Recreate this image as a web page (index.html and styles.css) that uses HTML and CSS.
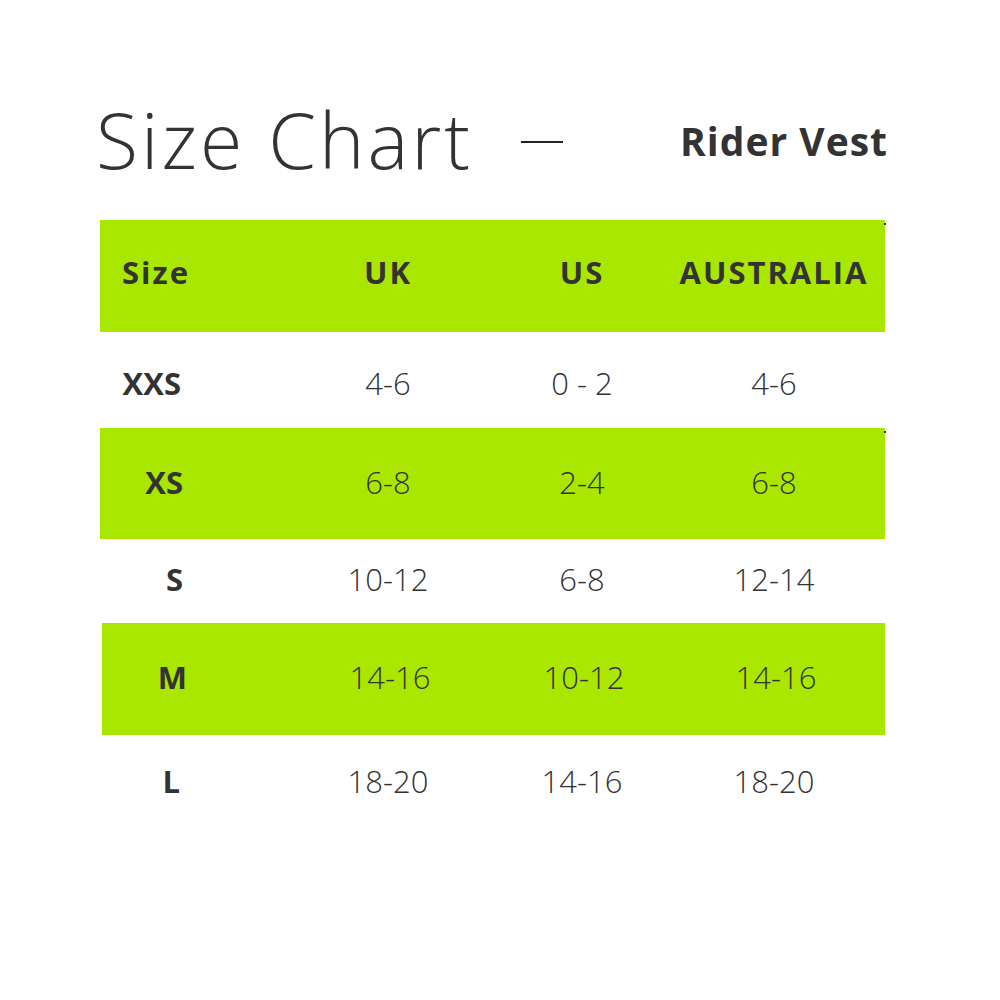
FILE: index.html
```html
<!DOCTYPE html>
<html>
<head>
<meta charset="utf-8">
<link rel="stylesheet" href="styles.css">
</head>
<body>
<div class="page">
  <div class="title">
    <h1 class="title-main">Size Chart</h1>
    <span class="title-dash"></span>
    <span class="title-product">Rider Vest</span>
  </div>
  <div class="chart">
    <div class="row row-head green mark">
      <div class="cell c-size head-size">Size</div>
      <div class="cell c-uk">UK</div>
      <div class="cell c-us">US</div>
      <div class="cell c-au">AUSTRALIA</div>
    </div>
    <div class="row r-xxs">
      <div class="cell c-size">XXS</div>
      <div class="cell c-uk">4-6</div>
      <div class="cell c-us">0 - 2</div>
      <div class="cell c-au">4-6</div>
    </div>
    <div class="row r-xs green mark">
      <div class="cell c-size">XS</div>
      <div class="cell c-uk">6-8</div>
      <div class="cell c-us">2-4</div>
      <div class="cell c-au">6-8</div>
    </div>
    <div class="row r-s">
      <div class="cell c-size">S</div>
      <div class="cell c-uk">10-12</div>
      <div class="cell c-us">6-8</div>
      <div class="cell c-au">12-14</div>
    </div>
    <div class="row r-m green shifted">
      <div class="cell c-size">M</div>
      <div class="cell c-uk">14-16</div>
      <div class="cell c-us">10-12</div>
      <div class="cell c-au">14-16</div>
    </div>
    <div class="row r-l">
      <div class="cell c-size">L</div>
      <div class="cell c-uk">18-20</div>
      <div class="cell c-us">14-16</div>
      <div class="cell c-au">18-20</div>
    </div>
  </div>
</div>
</body>
</html>
```

FILE: styles.css
```css
html, body {
  margin: 0;
  padding: 0;
  background: #ffffff;
}
body {
  font-family: "Open Sans", "Liberation Sans", sans-serif;
  color: #333333;
  width: 1000px;
  height: 1000px;
}
.page {
  padding: 100px 0 0 100px;
  width: 786px;
}
.title {
  display: flex;
  align-items: center;
  height: 80px;
  margin-bottom: 40px;
}
.title-main {
  margin: 0 0 0 -4px;
  font-weight: 300;
  font-size: 77px;
  line-height: 80px;
  letter-spacing: 3px;
}
.title-dash {
  width: 42px;
  height: 2px;
  background: #222;
  margin-left: 48px;
  margin-top: 4px;
}
.title-product {
  margin-left: auto;
  margin-right: -2px;
  font-weight: 700;
  font-size: 39px;
  line-height: 80px;
  letter-spacing: 1px;
  margin-top: 2px;
}
.chart {
  width: 785px;
}
.row {
  position: relative;
  display: grid;
  grid-template-columns: 188px 200px 188px 196px;
  align-items: center;
  font-size: 31px;
  font-weight: 300;
  box-sizing: border-box;
  padding-bottom: 4px;
}
.green {
  background: #a9e600;
}
.shifted {
  margin-left: 2px;
}
.mark::after {
  content: "";
  position: absolute;
  right: -1px;
  top: 3px;
  width: 2px;
  height: 2px;
  background: #333;
}
.row-head {
  height: 112px;
  font-weight: 700;
  font-size: 31px;
  letter-spacing: 2px;
  padding-bottom: 8px;
}
.r-xxs { height: 96px; padding-top: 6px; padding-bottom: 0; }
.r-xs { height: 111px; }
.r-s { height: 84px; }
.r-m { height: 112px; }
.r-l { height: 96px; }
.cell {
  text-align: center;
}
.c-size {
  text-align: right;
  padding-right: 105px;
  font-weight: 700;
}
.head-size {
  text-align: left;
  padding-left: 22px;
  padding-right: 0;
}
.r-xxs .c-size { padding-right: 107px; }
.r-m .c-size { padding-right: 103px; }
.r-l .c-size { padding-right: 108px; }
```
